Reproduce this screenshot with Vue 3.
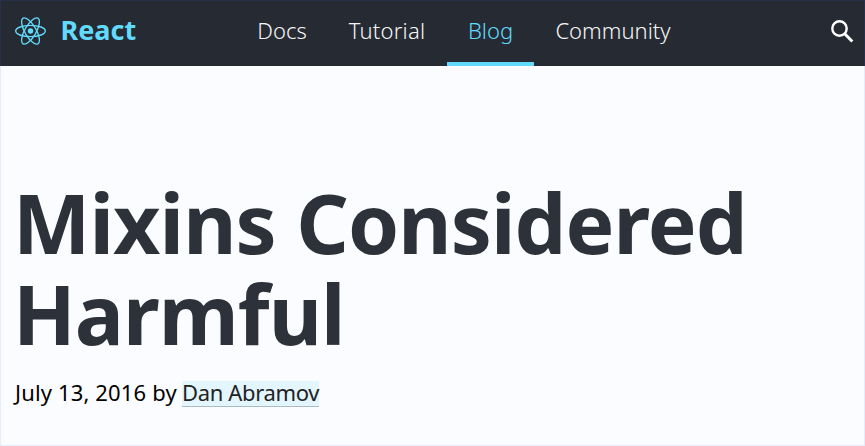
<script setup>
const links = [
  { label: 'Docs', key: 'docs' },
  { label: 'Tutorial', key: 'tutorial' },
  { label: 'Blog', key: 'blog', active: true },
  { label: 'Community', key: 'community' },
]
</script>

<template>
  <div class="page">
    <header class="bar">
      <a class="brand">
        <svg class="logo" viewBox="-11.5 -10.232 23 20.463" aria-hidden="true">
          <circle r="2.05" fill="currentColor" />
          <g fill="none" stroke="currentColor">
            <ellipse rx="11" ry="4.2" />
            <ellipse rx="11" ry="4.2" transform="rotate(60)" />
            <ellipse rx="11" ry="4.2" transform="rotate(120)" />
          </g>
        </svg>
        <span class="name">React</span>
      </a>
      <nav class="nav">
        <a v-for="l in links" :key="l.key" class="link" :class="[l.key, { active: l.active }]">
          <span class="label">{{ l.label }}</span>
        </a>
      </nav>
      <svg class="search" viewBox="0 0 24 24" fill="none" stroke="currentColor" aria-hidden="true">
        <circle cx="9.5" cy="9.5" r="7.2" stroke-width="2.4" />
        <path d="M14.7 14.7 22.3 22.5" stroke-width="3" />
      </svg>
    </header>
    <main class="content">
      <h1 class="title">Mixins Considered Harmful</h1>
      <p class="meta"><span class="date">July 13, 2016 by</span><a class="author">Dan Abramov</a></p>
    </main>
  </div>
</template>

<style>
body {
  margin: 0;
}
</style>

<style scoped>
.page {
  box-sizing: border-box;
  height: 446px;
  border: 1px solid #e4edf9;
  border-top: 0;
  background: #fbfcff;
  font-family: "Noto Sans", "Open Sans", sans-serif;
}
.bar {
  box-sizing: border-box;
  display: flex;
  height: 66px;
  margin: 0 -1px;
  padding: 0 10px 0 14px;
  border: 1px solid #26304a;
  border-bottom: 0;
  background: #262a33;
  color: #fff;
}
.brand {
  display: flex;
  align-items: center;
  width: 222px;
  height: 60px;
  color: #61dafb;
}
.logo {
  width: 31px;
  height: 28px;
  margin-right: 14.5px;
}
.name {
  font-size: 27px;
  font-weight: 700;
  line-height: 58px;
  height: 60px;
}
.nav {
  display: flex;
}
.link {
  box-sizing: border-box;
  display: flex;
  justify-content: center;
  height: 65px;
  font-size: 22px;
  font-weight: 300;
  line-height: 59px;
  white-space: nowrap;
  color: #f5f5f5;
}
.docs {
  width: 90px;
}
.tutorial {
  width: 120px;
  letter-spacing: 0.2px;
}
.blog {
  width: 87px;
}
.community {
  width: 158px;
}
.link.active {
  border-bottom: 4px solid #61dafb;
  color: #61dafb;
}
.search {
  width: 24px;
  height: 24px;
  margin: 18px 0 0 auto;
}
.content {
  padding: 111px 14px 0;
}
.title {
  margin: 0 0 0 -2px;
  font-size: 82px;
  font-weight: 700;
  line-height: 91px;
  letter-spacing: -0.9px;
  color: #2d313a;
}
.meta {
  display: flex;
  align-items: flex-start;
  margin: 22px 0 0;
  font-size: 22px;
  line-height: 22px;
  white-space: nowrap;
  color: #000;
}
.date {
  width: 167px;
  letter-spacing: 0.15px;
}
.author {
  box-sizing: border-box;
  width: 137px;
  height: 26px;
  border-bottom: 1px solid #a9bbc3;
  background: #e3f5fd;
  letter-spacing: -0.35px;
  color: #222;
}
</style>
